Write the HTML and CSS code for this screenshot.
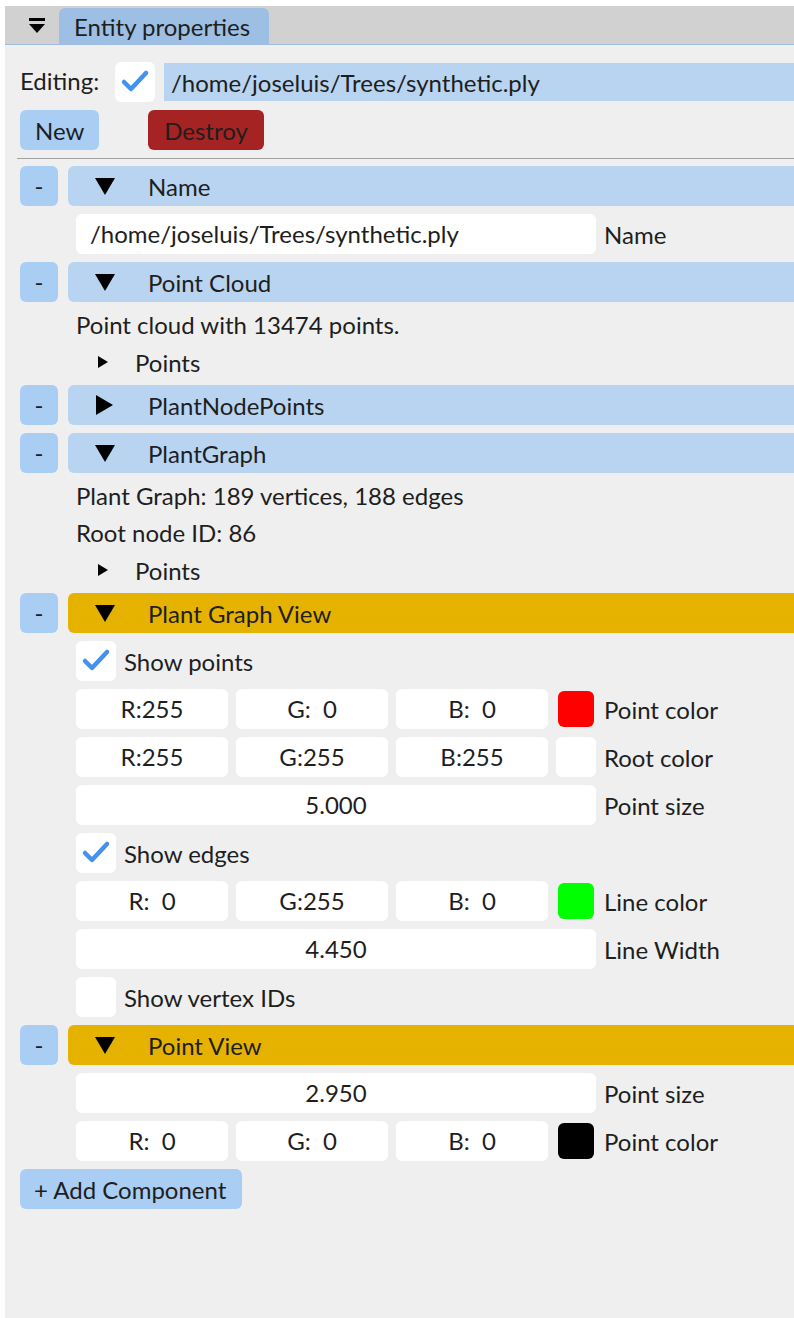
FILE: index.html
```html
<!DOCTYPE html>
<html lang="en">
<head>
<meta charset="utf-8">
<title>Entity properties</title>
<link rel="stylesheet" href="styles.css">
</head>
<body>
<div class="window">
  <div class="titlebar">
    <span class="collapse">
      <svg width="18" height="18" viewBox="0 0 18 18"><rect x="1" y="1" width="16" height="3" fill="#000"/><polygon points="1,7 17,7 9,16" fill="#000"/></svg>
    </span>
    <div class="tab">Entity properties</div>
  </div>
  <div class="body">
    <div class="row">
      <span class="label editing">Editing:</span>
      <span class="check on"><svg viewBox="0 0 40 40"><polyline points="9,20 16,27 31,11" fill="none" stroke="#4292ee" stroke-width="4.5" stroke-linecap="round" stroke-linejoin="round"/></svg></span>
      <span class="path">/home/joseluis/Trees/synthetic.ply</span>
    </div>
    <div class="row">
      <button class="btn blue">New</button>
      <button class="btn red">Destroy</button>
    </div>
    <div class="sep"></div>

    <div class="header-row">
      <button class="btn minus">-</button>
      <div class="header"><span class="tri down"></span>Name</div>
    </div>
    <div class="row indent">
      <span class="field wide left">/home/joseluis/Trees/synthetic.ply</span>
      <span class="label">Name</span>
    </div>

    <div class="header-row">
      <button class="btn minus">-</button>
      <div class="header"><span class="tri down"></span>Point Cloud</div>
    </div>
    <div class="text indent">Point cloud with 13474 points.</div>
    <div class="tree indent"><span class="tri small right"></span>Points</div>

    <div class="header-row">
      <button class="btn minus">-</button>
      <div class="header"><span class="tri right"></span>PlantNodePoints</div>
    </div>

    <div class="header-row">
      <button class="btn minus">-</button>
      <div class="header"><span class="tri down"></span>PlantGraph</div>
    </div>
    <div class="text indent">Plant Graph: 189 vertices, 188 edges</div>
    <div class="text indent">Root node ID: 86</div>
    <div class="tree indent"><span class="tri small right"></span>Points</div>

    <div class="header-row">
      <button class="btn minus">-</button>
      <div class="header active"><span class="tri down"></span>Plant Graph View</div>
    </div>
    <div class="row indent">
      <span class="check on"><svg viewBox="0 0 40 40"><polyline points="9,20 16,27 31,11" fill="none" stroke="#4292ee" stroke-width="4.5" stroke-linecap="round" stroke-linejoin="round"/></svg></span>
      <span class="label">Show points</span>
    </div>
    <div class="row indent">
      <span class="field">R:255</span><span class="field">G:&nbsp;&nbsp;0</span><span class="field">B:&nbsp;&nbsp;0</span>
      <span class="swatch"><span class="fill" style="background:#ff0000"></span></span>
      <span class="label">Point color</span>
    </div>
    <div class="row indent">
      <span class="field">R:255</span><span class="field">G:255</span><span class="field">B:255</span>
      <span class="swatch white"><span class="fill" style="background:#ffffff"></span></span>
      <span class="label">Root color</span>
    </div>
    <div class="row indent">
      <span class="field wide">5.000</span>
      <span class="label">Point size</span>
    </div>
    <div class="row indent">
      <span class="check on"><svg viewBox="0 0 40 40"><polyline points="9,20 16,27 31,11" fill="none" stroke="#4292ee" stroke-width="4.5" stroke-linecap="round" stroke-linejoin="round"/></svg></span>
      <span class="label">Show edges</span>
    </div>
    <div class="row indent">
      <span class="field">R:&nbsp;&nbsp;0</span><span class="field">G:255</span><span class="field">B:&nbsp;&nbsp;0</span>
      <span class="swatch"><span class="fill" style="background:#00ff00"></span></span>
      <span class="label">Line color</span>
    </div>
    <div class="row indent">
      <span class="field wide">4.450</span>
      <span class="label">Line Width</span>
    </div>
    <div class="row indent">
      <span class="check"></span>
      <span class="label">Show vertex IDs</span>
    </div>

    <div class="header-row">
      <button class="btn minus">-</button>
      <div class="header active"><span class="tri down"></span>Point View</div>
    </div>
    <div class="row indent">
      <span class="field wide">2.950</span>
      <span class="label">Point size</span>
    </div>
    <div class="row indent">
      <span class="field">R:&nbsp;&nbsp;0</span><span class="field">G:&nbsp;&nbsp;0</span><span class="field">B:&nbsp;&nbsp;0</span>
      <span class="swatch"><span class="fill" style="background:#000000"></span></span>
      <span class="label">Point color</span>
    </div>
    <div class="row">
      <button class="btn blue add">+ Add Component</button>
    </div>
  </div>
</div>
</body>
</html>
```
FILE: styles.css
```css
html, body {
  margin: 0;
  padding: 0;
  background: #ffffff;
}

body {
  font-family: Lato, "Noto Sans", sans-serif;
  font-size: 24px;
  color: #1e1e1e;
  width: 794px;
  height: 1318px;
  overflow: hidden;
}

.window {
  margin: 6px 0 0 5px;
  height: 1312px;
  background: #efefef;
  display: flex;
  flex-direction: column;
}

/* title bar with the collapse toggle and the docked tab */
.titlebar {
  height: 38px;
  background: #d1d1d1;
  border-bottom: 1px solid #9ebde2;
  display: flex;
  align-items: flex-end;
  flex: none;
}

.collapse {
  width: 54px;
  height: 38px;
  display: flex;
  align-items: center;
  justify-content: center;
  box-sizing: border-box;
}

.collapse svg {
  display: block;
  margin-left: 10px;
  margin-top: 2px;
}

.tab {
  height: 36px;
  width: 210px;
  box-sizing: border-box;
  padding-left: 15px;
  background: #9ebfe4;
  border-radius: 6px 6px 0 0;
  line-height: 38px;
  white-space: nowrap;
}

.body {
  padding: 17px 0 0 15px;
  display: flex;
  flex-direction: column;
  gap: 8px;
}

.row {
  display: flex;
  align-items: center;
  gap: 8px;
  height: 40px;
}

.indent {
  padding-left: 56px;
}

.label {
  white-space: nowrap;
}

.editing {
  width: 87px;
  margin-top: -4px;
}

.check {
  width: 40px;
  height: 40px;
  border-radius: 6px;
  background: #ffffff;
  flex: none;
  display: block;
}

.check svg {
  width: 40px;
  height: 40px;
  display: block;
}

.path {
  flex: 1;
  height: 38px;
  line-height: 40px;
  background: #b8d4f1;
  padding-left: 7px;
  margin-left: 1px;
  white-space: nowrap;
}

.btn {
  font-family: inherit;
  font-size: 24px;
  color: #1e1e1e;
  border: none;
  border-radius: 6px;
  height: 40px;
  padding: 0 15px;
  margin: 0;
  flex: none;
  white-space: nowrap;
}

.btn.blue {
  background: #a9cdf3;
  width: 79px;
}

.btn.red {
  background: #a52323;
  width: 116px;
  margin-left: 41px;
}

.btn.add {
  width: 222px;
  text-align: left;
  padding-left: 14px;
}

.sep {
  height: 0;
  border-top: 1px solid #a3a3a3;
  margin: 0 0 -1px -3px;
}

.header-row {
  display: flex;
  height: 40px;
  gap: 10px;
}

.btn.minus {
  width: 38px;
  padding: 0;
  background: #a9cdf3;
  text-align: center;
  line-height: 38px;
}

.header {
  flex: 1;
  height: 40px;
  background: #b8d4f1;
  border-radius: 6px 0 0 6px;
  display: flex;
  align-items: center;
  padding-left: 27px;
  white-space: nowrap;
}

.header.active {
  background: #e6b200;
}

/* tree arrows */
.tri {
  width: 0;
  height: 0;
  margin-right: 33px;
  flex: none;
}

.tri.down {
  border-left: 10px solid transparent;
  border-right: 10px solid transparent;
  border-top: 17px solid #000;
}

.tri.right {
  border-top: 10px solid transparent;
  border-bottom: 10px solid transparent;
  border-left: 17px solid #000;
  margin-left: 1px;
  margin-right: 35px;
}

.tri.small.right {
  border-top: 6px solid transparent;
  border-bottom: 6px solid transparent;
  border-left: 10px solid #000;
  margin-left: 22px;
  margin-right: 27px;
}

.text {
  height: 29px;
  line-height: 29px;
  white-space: nowrap;
}

.tree {
  height: 30px;
  display: flex;
  align-items: center;
}

.field {
  width: 152px;
  height: 40px;
  line-height: 40px;
  background: #ffffff;
  border-radius: 6px;
  text-align: center;
  white-space: pre;
  flex: none;
}

.field.wide {
  width: 520px;
}

.field.left {
  text-align: left;
  padding-left: 14px;
  box-sizing: border-box;
}

.swatch {
  width: 40px;
  height: 40px;
  flex: none;
  position: relative;
}

.swatch .fill {
  position: absolute;
  inset: 2px;
  border-radius: 6px;
}

.swatch.white .fill {
  inset: 0;
}
```
